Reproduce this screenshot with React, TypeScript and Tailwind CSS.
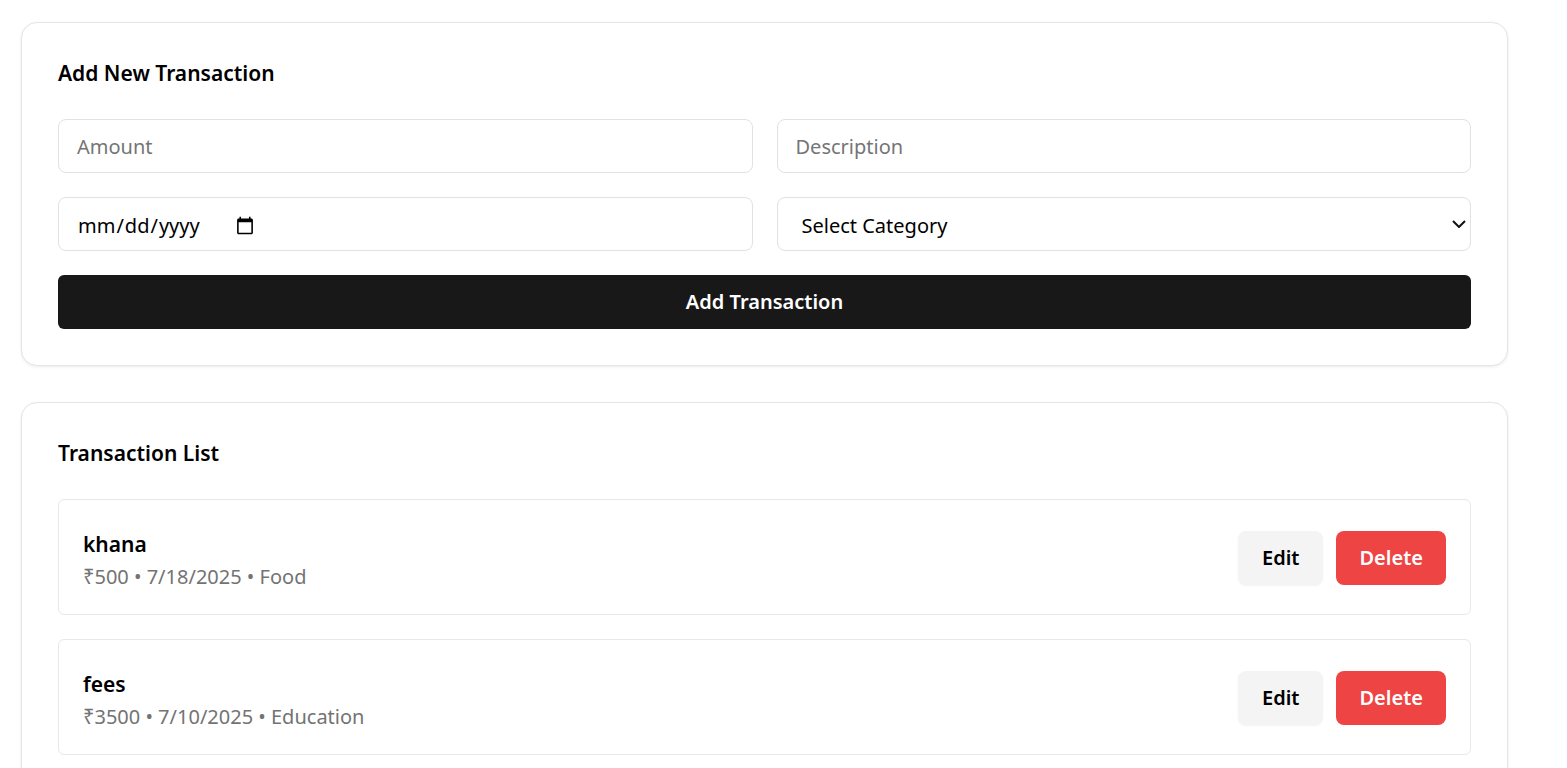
import React from "react";

const items = [
  { name: "khana", meta: "₹500 • 7/18/2025 • Food" },
  { name: "fees", meta: "₹3500 • 7/10/2025 • Education" },
];

export default function App() {
  return (
    <div
      className="min-h-screen bg-white text-black"
      style={{ fontFamily: '"Noto Sans", "Open Sans", sans-serif' }}
    >
      <div className="ml-[21px] w-[1487px] pt-[22px] flex flex-col gap-[36px]">
        <div className="rounded-2xl border border-[#e5e5e5] bg-white p-9 shadow-[0_1px_3px_rgba(0,0,0,0.08)]">
          <h2 className="text-[21px] font-semibold leading-7">Add New Transaction</h2>
          <div className="mt-8 grid grid-cols-2 gap-6">
            <input
              placeholder="Amount"
              className="h-[54px] rounded-lg border border-[#e2e2e2] px-[18px] text-[20px] outline-none placeholder:text-[#757575]"
            />
            <input
              placeholder="Description"
              className="h-[54px] rounded-lg border border-[#e2e2e2] px-[18px] text-[20px] outline-none placeholder:text-[#757575]"
            />
            <div className="flex h-[54px] items-center rounded-lg border border-[#e2e2e2] px-[18px] pt-[4px]">
              <input type="date" className="w-[180px] text-[20px] outline-none" />
            </div>
            <div className="relative">
              <select className="h-[54px] w-full appearance-none rounded-lg border border-[#e2e2e2] bg-white px-[24px] pt-[4px] text-[20px] outline-none">
                <option>Select Category</option>
              </select>
              <svg
                className="pointer-events-none absolute right-[5px] top-1/2 -translate-y-1/2"
                width="14"
                height="8"
                viewBox="0 0 14 8"
                fill="none"
                stroke="#111"
                strokeWidth="2"
              >
                <path d="M1 1l6 6 6-6" />
              </svg>
            </div>
            <button className="col-span-2 h-[54px] rounded-md bg-[#181818] text-[20px] font-semibold text-white">
              Add Transaction
            </button>
          </div>
        </div>

        <div className="rounded-2xl border border-[#e5e5e5] bg-white p-9 shadow-[0_1px_3px_rgba(0,0,0,0.08)]">
          <h2 className="text-[21px] font-semibold leading-7">Transaction List</h2>
          <div className="mt-8 flex flex-col gap-6">
            {items.map((it) => (
              <div
                key={it.name}
                className="flex items-center justify-between rounded-md border border-[#e8e8e8] px-6 pt-[28px] pb-[27px]"
              >
                <div>
                  <div className="text-[21px] font-semibold leading-8">{it.name}</div>
                  <div className="mt-[7px] text-[20px] leading-5 text-[#737373]">{it.meta}</div>
                </div>
                <div className="flex gap-[13px]">
                  <button className="h-[54px] rounded-lg bg-[#f4f4f4] px-6 text-[20px] font-semibold shadow-[0_1px_2px_rgba(0,0,0,0.05)]">
                    Edit
                  </button>
                  <button className="h-[54px] rounded-lg bg-[#ef4444] px-[23px] text-[20px] font-semibold text-white">
                    Delete
                  </button>
                </div>
              </div>
            ))}
          </div>
        </div>
      </div>
    </div>
  );
}
